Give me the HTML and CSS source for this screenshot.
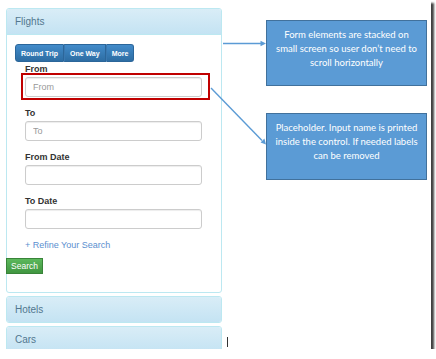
FILE: index.html
```html
<!DOCTYPE html>
<html>
<head>
  <meta charset="UTF-8">
  <meta name="viewport" content="width=device-width, initial-scale=1.0">
  <title>Search form on small screens</title>
  <link rel="stylesheet" href="styles.css">
</head>
<body>
  <div class="sheet">
    <div class="mock">
      <div class="panel">
        <div class="panel-heading open">Flights</div>
        <div class="panel-body">
          <div class="btn-group">
            <button class="btn">Round Trip</button><button class="btn">One Way</button><button class="btn">More</button>
          </div>

          <div class="field">
            <label for="from">From</label>
            <div class="marked">
              <input type="text" id="from" placeholder="From">
              <span class="mark"></span>
            </div>
          </div>

          <div class="field">
            <label for="to">To</label>
            <input type="text" id="to" placeholder="To">
          </div>

          <div class="field">
            <label for="fromDate">From Date</label>
            <input type="text" id="fromDate">
          </div>

          <div class="field">
            <label for="toDate">To Date</label>
            <input type="text" id="toDate">
          </div>

          <a class="refine" href="#">+ Refine Your Search</a>
          <button class="btn-search">Search</button>
        </div>
      </div>

      <div class="panel">
        <div class="panel-heading">Hotels</div>
      </div>
      <div class="panel">
        <div class="panel-heading">Cars</div>
      </div>
    </div>

    <div class="notes">
      <div class="note">Form elements are stacked on<br>small screen so user don’t need to<br>scroll horizontally</div>
      <div class="note">Placeholder. Input name is printed<br>inside the control. If needed labels<br>can be removed</div>
    </div>

    <!-- connectors from the form to the notes -->
    <svg class="arrows" width="436" height="359" viewBox="0 0 436 359">
      <line x1="223" y1="43.5" x2="262" y2="43.5" stroke="#5b9bd5" stroke-width="1.4"/>
      <polygon points="266,43.5 260.5,40.8 260.5,46.2" fill="#5b9bd5"/>
      <line x1="211" y1="88" x2="262" y2="140.5" stroke="#5b9bd5" stroke-width="1.4"/>
      <polygon points="266,144.5 264.4,138.6 260.6,142.4" fill="#5b9bd5"/>
      <line x1="227.5" y1="337" x2="227.5" y2="347" stroke="#333" stroke-width="1"/>
    </svg>
  </div>
</body>
</html>
```

FILE: styles.css
```css
body { margin: 0; background: #fff; font-family: "Liberation Sans", Arial, sans-serif; color: #333; }

.sheet { position: relative; display: flex; width: 431px; height: 349px; background: #fff; overflow: hidden; box-shadow: 3px 3px 2px rgba(0, 0, 0, 0.75); }

/* left: the mobile form */
.mock { width: 216px; flex-shrink: 0; padding: 8px 0 0 6px; }
.panel { border: 1px solid #bce8f1; border-radius: 3px; margin-bottom: 3px; background: #fff; }
.panel-heading { height: 25px; line-height: 25px; padding: 0 8px; font-size: 10px; color: #52778f; background: linear-gradient(#d9edf7, #c4e3f3); border-radius: 2px; }
.panel-heading.open { border-bottom: 1px solid #bce8f1; border-radius: 2px 2px 0 0; }
.panel-body { padding: 9px 8px 18px; }

.btn-group { display: flex; }
.btn { height: 18px; padding: 0 5px; border: 1px solid #2b669a; border-left-color: #3a78b0; font-family: "Liberation Sans", Arial, sans-serif; font-size: 7px; font-weight: bold; color: #fff; background: linear-gradient(#428bca, #2d6da3); }
.btn:first-child { border-radius: 3px 0 0 3px; border-left-color: #2b669a; }
.btn:last-child { border-radius: 0 3px 3px 0; }

.field { margin-left: 10px; margin-bottom: 9px; }
label { display: block; font-size: 9px; font-weight: bold; line-height: 14px; margin-bottom: 1px; }
input { display: block; box-sizing: border-box; width: 177px; height: 20px; padding: 0 7px; border: 1px solid #ccc; border-radius: 3px; box-shadow: inset 0 1px 1px rgba(0, 0, 0, 0.075); font-family: "Liberation Sans", Arial, sans-serif; font-size: 9px; color: #555; }
input::placeholder { color: #999; }

.marked { position: relative; }
.mark { position: absolute; left: -4px; top: -4px; width: 185px; height: 23px; border: 2px solid #c00000; }

.refine { display: block; margin: 9px 0 0 10px; line-height: 14px; font-size: 9px; color: #5b8fcf; text-decoration: none; }
.btn-search { display: block; margin: 6px 0 0 -9px; width: 37px; height: 16px; padding: 0; border: 1px solid #398439; font-family: "Liberation Sans", Arial, sans-serif; font-size: 8.5px; color: #fff; background: linear-gradient(#5cb85c, #419641); }

/* right: annotations */
.notes { display: flex; flex-direction: column; gap: 27px; margin-left: 44px; padding-top: 20px; }
.note { box-sizing: border-box; width: 161px; height: 66px; padding-top: 7px; border: 1px solid #41719c; background: #5b9bd5; color: #fff; font-family: Lato, "Open Sans", sans-serif; font-size: 9.5px; line-height: 14px; text-align: center; }
.note:last-child { height: 67px; }

.arrows { position: absolute; left: 0; top: 0; pointer-events: none; }
```
